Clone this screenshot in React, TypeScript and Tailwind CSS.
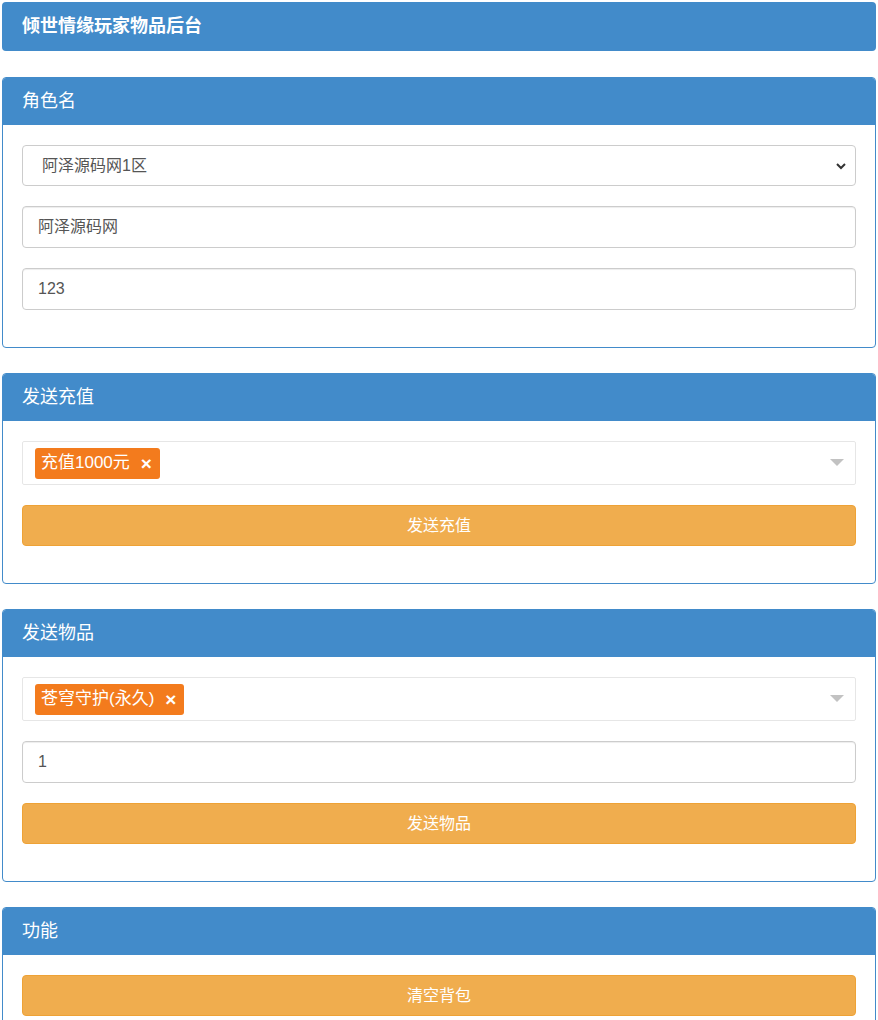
import React from "react";

const font = "font-['Liberation_Sans','Noto_Sans_CJK_SC',sans-serif]";

function Panel({ title, children }: { title: string; children: React.ReactNode }) {
  return (
    <div className="mx-[2px] mb-[25px] border border-[#428bca] rounded-[4px] bg-white overflow-hidden">
      <div className="h-[47px] bg-[#428bca] text-white text-[18px] flex items-center px-[19px]">{title}</div>
      <div className="px-[19px] pt-[20px] pb-[37px] flex flex-col gap-[20px]">{children}</div>
    </div>
  );
}

function TextBox({ value }: { value: string }) {
  return (
    <div className="h-[42px] border border-[#ccc] rounded-[4px] flex items-center px-[15px] text-[16px] text-[#555] shadow-[inset_0_1px_1px_rgba(0,0,0,0.075)]">
      {value}
    </div>
  );
}

function SelectBox({ value }: { value: string }) {
  return (
    <div className="h-[41px] border border-[#ccc] rounded-[4px] flex items-center justify-between pl-[19px] pr-[8px] text-[16px] text-[#555]">
      <span>{value}</span>
      <svg width="12" height="12" viewBox="0 0 12 12">
        <path d="M2 4l4 4 4-4" fill="none" stroke="#333" strokeWidth="2" />
      </svg>
    </div>
  );
}

function TagSelect({ tag }: { tag: string }) {
  return (
    <div className="h-[44px] border border-[#e6e6e6] rounded-[2px] flex items-center justify-between pl-[12px] pr-[10px]">
      <span className="h-[31px] bg-[#f37b1d] text-white text-[17px] rounded-[3px] flex items-center pl-[6px] pr-[8px] gap-[11px]">
        {tag}
        <span className="text-[19px] font-bold leading-none">×</span>
      </span>
      <svg width="16" height="10" viewBox="0 0 16 10">
        <path d="M1 1h14L8 8z" fill="#c2c2c2" />
      </svg>
    </div>
  );
}

function Btn({ label }: { label: string }) {
  return (
    <button className="h-[41px] w-full bg-[#f0ad4e] border border-[#eea236] rounded-[4px] text-white text-[16px]">
      {label}
    </button>
  );
}

export default function App() {
  return (
    <div className={`${font} bg-white w-[878px] min-h-[1020px] pt-[2px]`}>
      <div className="mx-[2px] mb-[26px] h-[49px] bg-[#428bca] rounded-[4px] text-white text-[18px] font-bold flex items-center px-[20px]">
        倾世情缘玩家物品后台
      </div>

      <Panel title="角色名">
        <SelectBox value="阿泽源码网1区" />
        <TextBox value="阿泽源码网" />
        <TextBox value="123" />
      </Panel>

      <Panel title="发送充值">
        <TagSelect tag="充值1000元" />
        <Btn label="发送充值" />
      </Panel>

      <Panel title="发送物品">
        <TagSelect tag="苍穹守护(永久)" />
        <TextBox value="1" />
        <Btn label="发送物品" />
      </Panel>

      <Panel title="功能">
        <Btn label="清空背包" />
      </Panel>
    </div>
  );
}
